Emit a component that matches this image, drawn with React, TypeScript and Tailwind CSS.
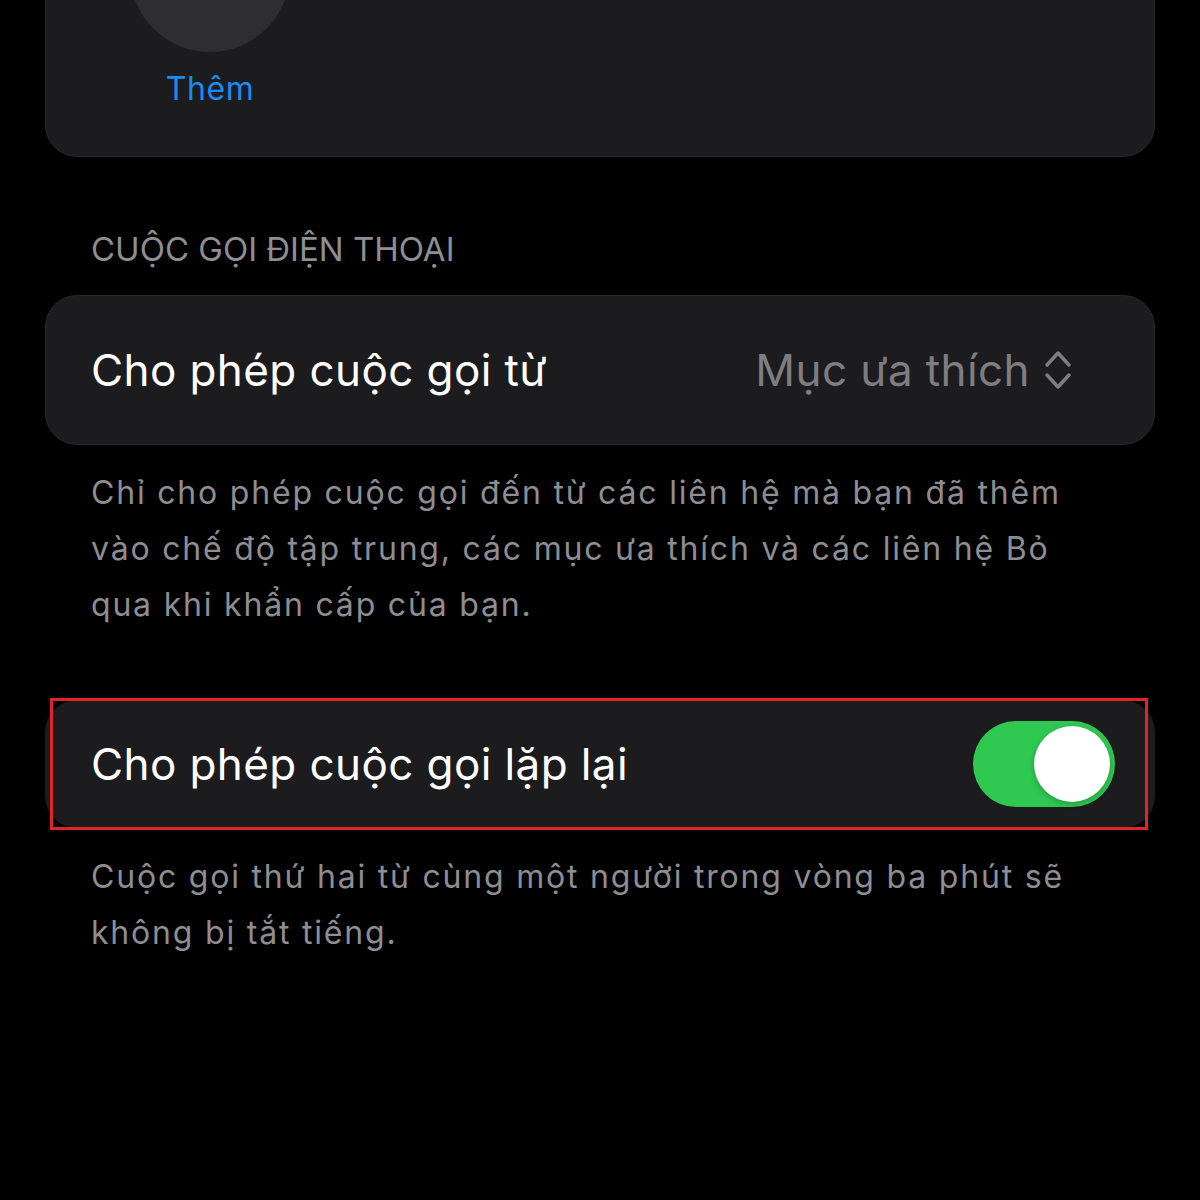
export default function App() {
  return (
    <div className="w-[1200px] h-[1200px] bg-black overflow-hidden font-['Inter','Noto_Sans',sans-serif]">
      {/* Top card (partially visible) */}
      <div className="mx-[45px] mt-[-140px] h-[297px] rounded-[32px] bg-[#1c1c1e] border border-[#29292b] pt-[31px] pl-[84px]">
        <div className="flex flex-col items-center w-[160px]">
          <div className="w-[160px] h-[160px] rounded-full bg-[#2e2e32]" />
          <div className="mt-[19px] text-[32px] leading-[36px] tracking-[0.6px] text-[#1a8cf2]">Thêm</div>
        </div>
      </div>

      {/* Section header */}
      <div className="mt-[72px] ml-[91px] text-[33px] leading-[40px] text-[#8e8e93]">
        CUỘC GỌI ĐIỆN THOẠI
      </div>

      {/* Allow calls from */}
      <div className="mx-[45px] mt-[26px] h-[150px] rounded-[32px] bg-[#1c1c1e] border border-[#29292b] flex items-center justify-between pl-[45px] pr-[82px]">
        <span className="text-[44px] leading-[52px] tracking-[0.4px] text-white">Cho phép cuộc gọi từ</span>
        <div className="flex items-center gap-[14px]">
          <span className="text-[44px] leading-[52px] tracking-[0.4px] text-[#7d7d82]">Mục ưa thích</span>
          <svg width="28" height="42" viewBox="0 0 28 42" fill="none">
            <path d="M3 16 L14 4 L25 16" stroke="#7d7d82" strokeWidth="3.5" strokeLinecap="round" strokeLinejoin="round" />
            <path d="M3 26 L14 38 L25 26" stroke="#7d7d82" strokeWidth="3.5" strokeLinecap="round" strokeLinejoin="round" />
          </svg>
        </div>
      </div>

      <div className="mt-[20px] ml-[91px] text-[32px] leading-[56px] tracking-[1.8px] text-[#8d8d92]">
        <div>Chỉ cho phép cuộc gọi đến từ các liên hệ mà bạn đã thêm</div>
        <div>vào chế độ tập trung, các mục ưa thích và các liên hệ Bỏ</div>
        <div>qua khi khẩn cấp của bạn.</div>
      </div>

      {/* Repeated calls */}
      <div className="relative mx-[45px] mt-[67px] h-[128px] rounded-[32px] bg-[#1c1c1e] flex items-center justify-between pl-[46px] pr-[40px]">
        <span className="text-[44px] leading-[52px] tracking-[0.4px] text-white">Cho phép cuộc gọi lặp lại</span>
        <div className="w-[142px] h-[86px] rounded-full bg-[#2fc952] flex items-center justify-end pr-[5px]">
          <div className="w-[76px] h-[76px] rounded-full bg-white shadow-[0_2px_6px_rgba(0,0,0,0.25)]" />
        </div>
        <div className="absolute left-[5px] right-[7px] top-[-2px] bottom-[-2px] border-[3px] border-[#e2232a] pointer-events-none" />
      </div>

      <div className="mt-[21px] ml-[91px] text-[32px] leading-[56px] tracking-[1.8px] text-[#8d8d92]">
        <div>Cuộc gọi thứ hai từ cùng một người trong vòng ba phút sẽ</div>
        <div>không bị tắt tiếng.</div>
      </div>
    </div>
  );
}
